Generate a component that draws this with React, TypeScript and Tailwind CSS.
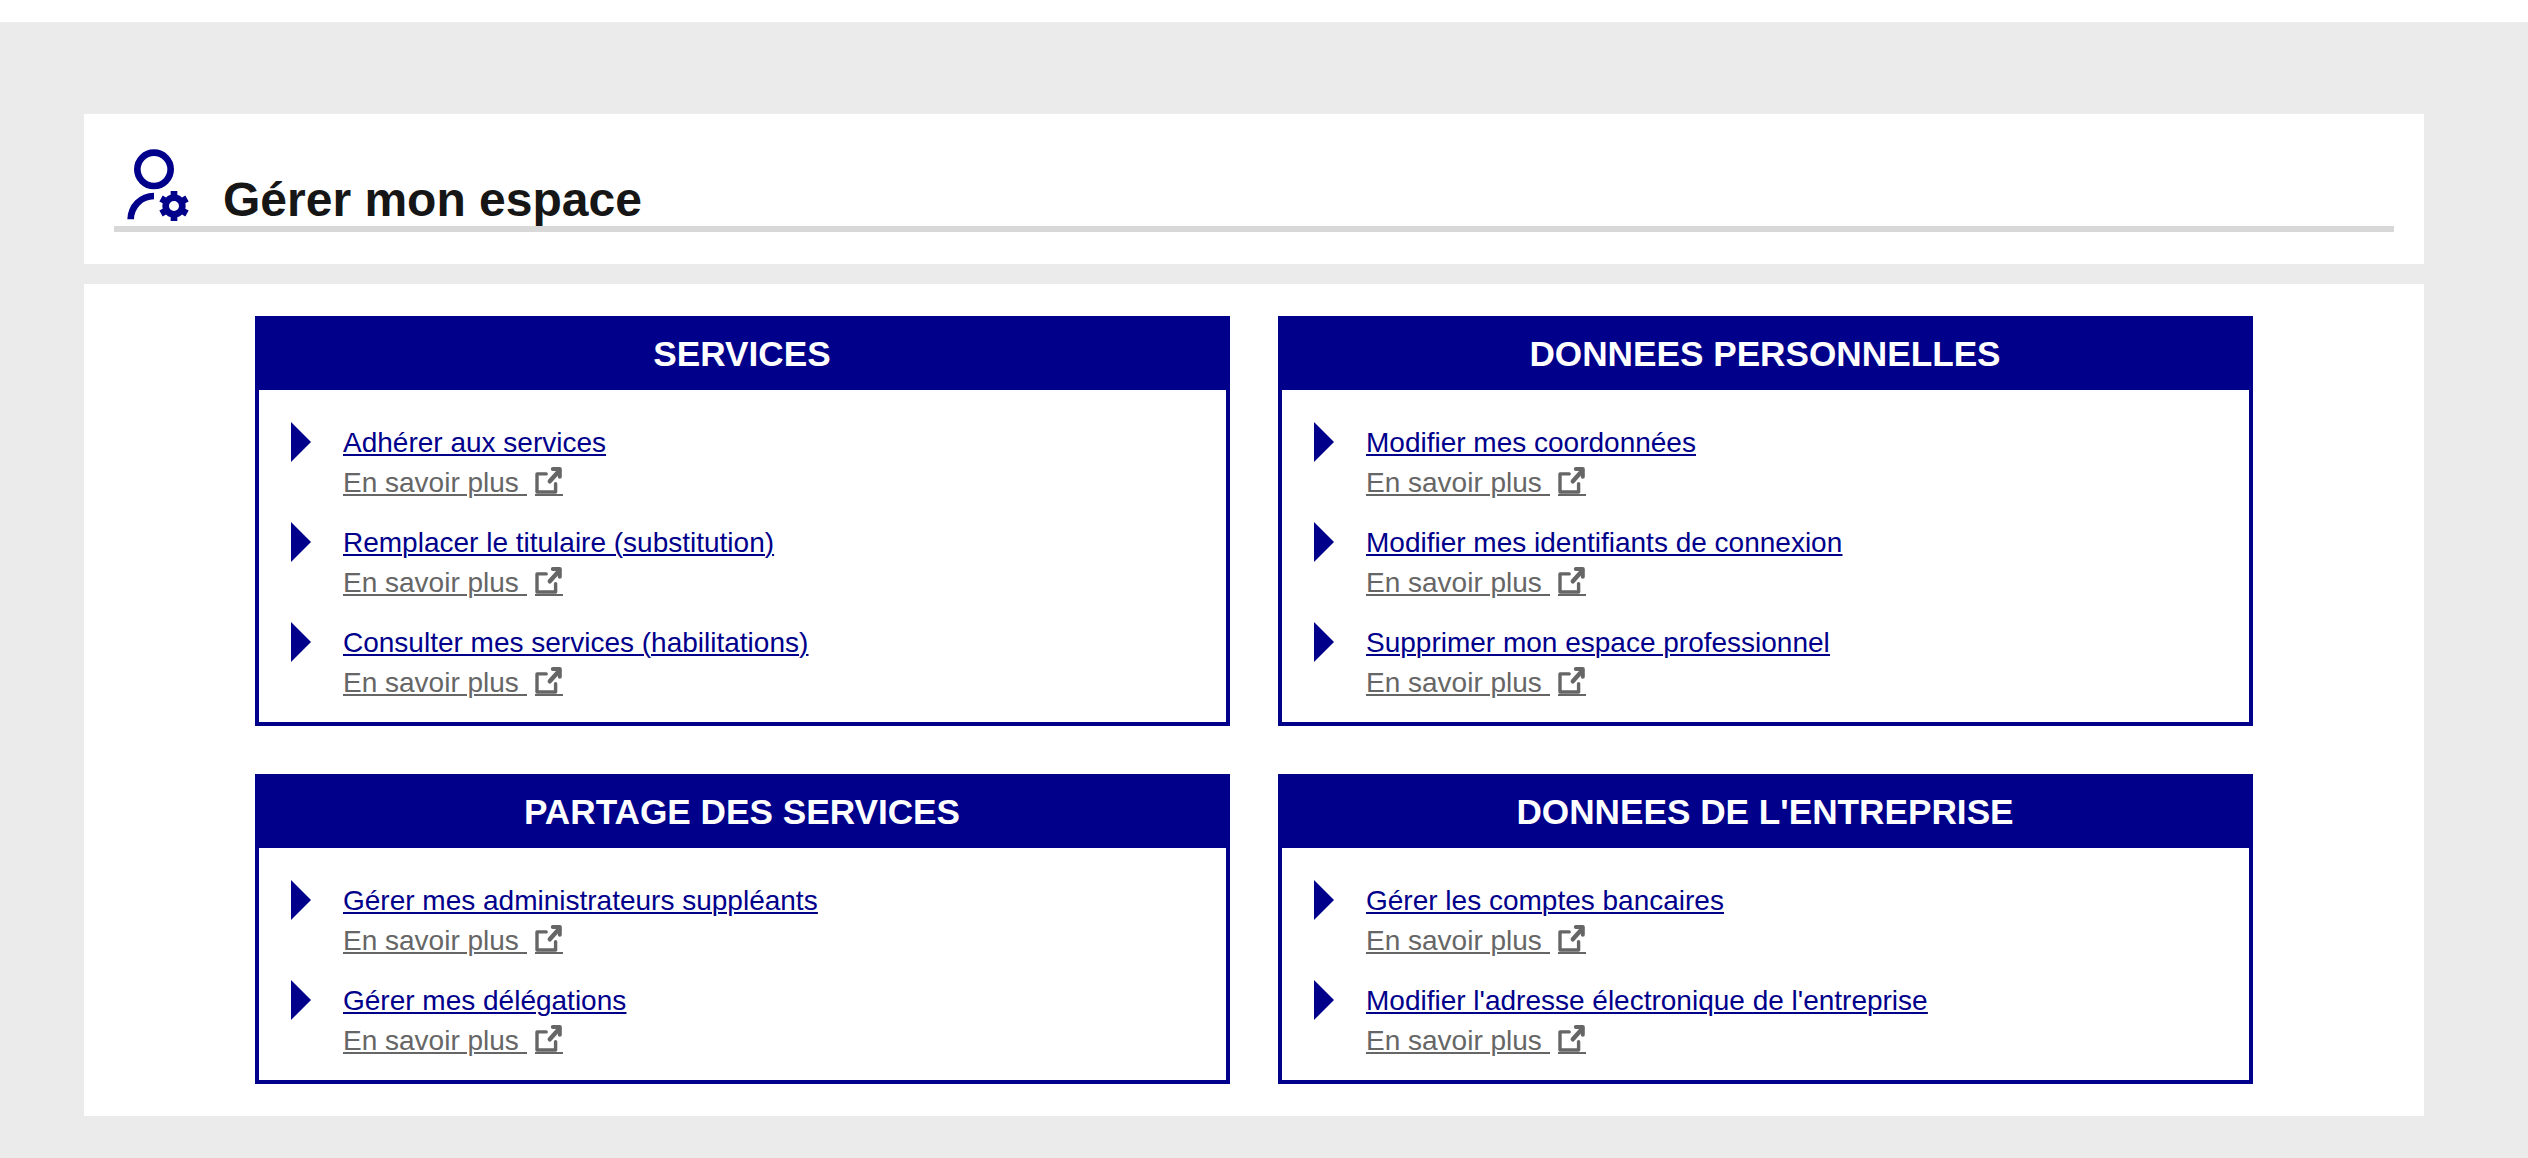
import React from 'react';

interface Section {
    title: string;
    links: string[];
}

const sections: Section[] = [
    {
        title: 'SERVICES',
        links: [
            'Adhérer aux services',
            'Remplacer le titulaire (substitution)',
            'Consulter mes services (habilitations)',
        ],
    },
    {
        title: 'DONNEES PERSONNELLES',
        links: [
            'Modifier mes coordonnées',
            'Modifier mes identifiants de connexion',
            'Supprimer mon espace professionnel',
        ],
    },
    {
        title: 'PARTAGE DES SERVICES',
        links: ['Gérer mes administrateurs suppléants', 'Gérer mes délégations'],
    },
    {
        title: "DONNEES DE L'ENTREPRISE",
        links: ['Gérer les comptes bancaires', "Modifier l'adresse électronique de l'entreprise"],
    },
];

const UserSettingsIcon: React.FC = () => (
    <svg width="80" height="80" viewBox="0 0 24 24" className="shrink-0 fill-[#00008b]">
        <circle cx="12" cy="7" r="5" fill="none" stroke="#00008b" strokeWidth="2" />
        <path d="M12 14v2a6 6 0 0 0-6 6H4a8 8 0 0 1 8-8z" />
        <path
            fillRule="evenodd"
            d="M14.595 18.812a3.51 3.51 0 0 1 0-1.623l-.992-.573 1-1.732.992.573A3.5 3.5 0 0 1 17 14.645V13.5h2v1.145a3.5 3.5 0 0 1 1.405.812l.992-.573 1 1.732-.992.573a3.51 3.51 0 0 1 0 1.622l.992.573-1 1.732-.992-.573a3.5 3.5 0 0 1-1.405.812V22.5h-2v-1.145a3.5 3.5 0 0 1-1.405-.812l-.992.573-1-1.732zM18 19.5a1.5 1.5 0 1 0 0-3 1.5 1.5 0 0 0 0 3z"
        />
    </svg>
);

const ExternalIcon: React.FC = () => (
    <svg width="28" height="29" viewBox="0 0 28 29" fill="none" stroke="currentColor" className="ml-2 shrink-0">
        <path d="M11.2 6.9H2V25H20.6V16.6" strokeWidth="3.4" strokeLinecap="round" strokeLinejoin="round" />
        <path d="M14.8 14.3L24 4" strokeWidth="4.4" strokeLinecap="round" />
        <path d="M17.8 2H24.8V9.8" strokeWidth="4" strokeLinecap="round" strokeLinejoin="round" />
        {/* underline below the glyph */}
        <path d="M0 28H28" strokeWidth="2" />
    </svg>
);

const SectionCard: React.FC<Section> = ({ title, links }) => (
    <section className="border-4 border-[#00008b]">
        <h2 className="bg-[#00008b] h-[70px] pr-px text-center text-[35.2px] leading-[67px] font-bold text-white">
            {title}
        </h2>
        <ul className="pt-8 pl-8">
            {links.map(link => (
                <li key={link} className="flex gap-8 mb-5">
                    <svg width="20" height="40" viewBox="0 0 20 40" className="shrink-0 fill-[#00008b]">
                        <path d="M0 0L20 20L0 40Z" />
                    </svg>
                    <div className="h-20 pt-px text-[28px] leading-10 underline decoration-2 underline-offset-2">
                        <a href="#" className="block text-[#00008b]">{link}</a>
                        <a href="#" className="flex items-start text-[#666666]">
                            <span className="whitespace-pre">{'En savoir plus '}</span>
                            <span className="pt-1"><ExternalIcon /></span>
                        </a>
                    </div>
                </li>
            ))}
        </ul>
    </section>
);

const App: React.FC = () => {
    return (
        <div className="min-h-screen bg-white pt-[22px] font-['Liberation_Sans',Arial,sans-serif]">
            <main className="min-h-[1136px] bg-[#ebebeb] pt-[92px] pl-[84px] pr-[104px]">
                <header className="h-[150px] bg-white px-[30px] pt-8">
                    <div className="flex h-[86px] border-b-6 border-[#d8d8d8]">
                        <UserSettingsIcon />
                        <h1 className="ml-[29px] pt-[26px] text-[48px] leading-[56px] font-bold text-[#161616]">
                            Gérer mon espace
                        </h1>
                    </div>
                </header>

                <div className="mt-5 grid grid-cols-2 gap-12 bg-white py-8 pl-[171px] pr-[171px]">
                    {sections.map(section => (
                        <SectionCard key={section.title} {...section} />
                    ))}
                </div>
            </main>
        </div>
    );
};

export default App;
